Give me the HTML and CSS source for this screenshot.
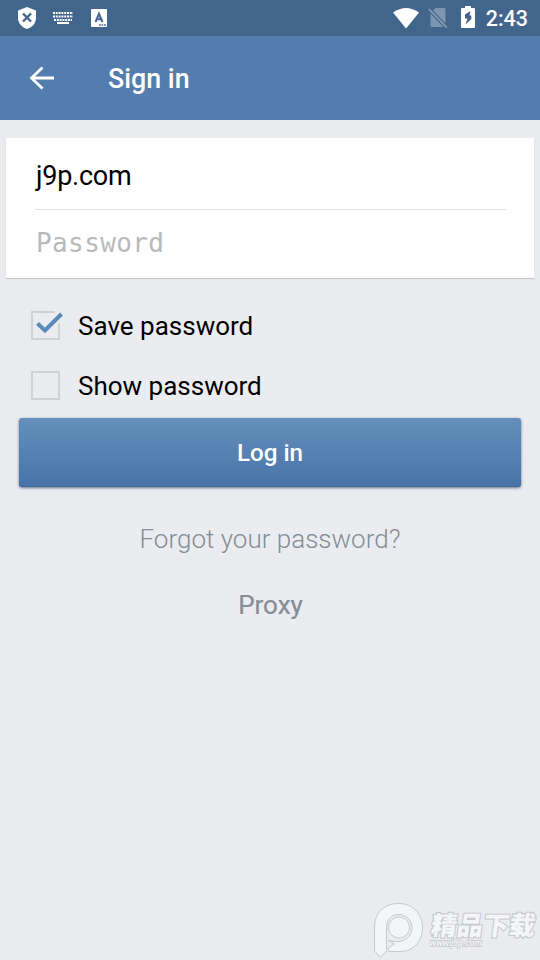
FILE: index.html
```
<!DOCTYPE html>
<html lang="en">
<head>
<meta charset="utf-8">
<title>Sign in</title>
<link rel="stylesheet" href="styles.css">
</head>
<body>
<header class="status">
  <div class="status-left">
    <svg width="20" height="22" viewBox="0 0 20 22"><path d="M10 0L19 3.500V11C19 16 15.500 20 10 22C4.500 20 1 16 1 11V3.500Z" fill="#fff"/><path d="M6 6.500L14 14.500M14 6.500L6 14.500" stroke="#42658c" stroke-width="2.400"/></svg>
    <svg width="22" height="14" viewBox="0 0 22 14"><path d="M1 2H21M1 5.500H21M2 9H20" stroke="#fff" stroke-width="2" stroke-dasharray="2 .8"/><path d="M5 12H17" stroke="#fff" stroke-width="2"/></svg>
    <svg class="letter" width="16" height="18" viewBox="0 0 16 18"><rect width="16" height="18" rx="1" fill="#fff"/><path d="M4.500 13L8 4.800L11.500 13M5.800 10.300H10.200" fill="none" stroke="#42658c" stroke-width="2"/><path d="M8 16H15" stroke="#42658c" stroke-width="1.500" stroke-dasharray="1.700 .8"/></svg>
  </div>
  <div class="status-right">
    <svg width="26" height="21" viewBox="0 0 26 21"><path d="M0 4.500Q13 -4.500 26 4.500L13 20.500Z" fill="#fff"/></svg>
    <svg class="sim" width="20" height="22" viewBox="0 0 20 22"><path d="M7.500 1H16Q17.500 1 17.500 2.500V16.500L5 3.500ZM2.500 6.500L15.500 20H4Q2.500 20 2.500 18.500Z" fill="#7c95b1"/><path d="M.8 2L18.800 20.500" stroke="#8ba1ba" stroke-width="1.600"/></svg>
    <svg class="battery" width="14" height="22" viewBox="0 0 14 22"><path d="M4 0H10V2H13Q14 2 14 3V21Q14 22 13 22H1Q0 22 0 21V3Q0 2 1 2H4Z" fill="#fff"/><path d="M9.500 5L4 8.500V12.500H6.500L4.500 18.500L10.300 13V9.500H8.500Z" fill="#42658c"/></svg>
    <span class="clock">2:43</span>
  </div>
</header>
<nav class="bar">
  <svg width="26" height="24" viewBox="0 0 26 24"><path d="M13.500 1.500L2.500 12L13.500 22.500M2.500 12H25" fill="none" stroke="#fff" stroke-width="2.800"/></svg>
  <h1>Sign in</h1>
</nav>
<main>
  <section class="fields">
    <div class="field login">j9p.com</div>
    <div class="field password">Password</div>
  </section>
  <div class="options">
    <div class="option"><svg width="32" height="30" viewBox="0 0 32 30"><path d="M24 2H1V29H28V13" fill="none" stroke="#d1d2d4" stroke-width="2"/><path d="M6.500 13.500L14 20.500L30.500 4" fill="none" stroke="#5b8ab9" stroke-width="4"/></svg><span>Save password</span></div>
    <div class="option"><svg width="32" height="30" viewBox="0 0 32 30"><rect x="1" y="2" width="27" height="27" fill="none" stroke="#d1d2d4" stroke-width="2"/></svg><span>Show password</span></div>
  </div>
  <div class="button">Log in</div>
  <div class="forgot">Forgot your password?</div>
  <div class="proxy">Proxy</div>
</main>
<div class="watermark">
  <svg width="170" height="60" viewBox="0 0 170 60">
    <g fill="#f4f5f8" stroke="#c8c9cc" stroke-width="1">
      <path d="M4.500 27C4.500 12 15 3.500 28.500 3.500C43 3.500 52.500 14 52.500 27.500C52.500 42 43 51.500 30 51.500H18.500V48L24.500 44L18.500 40.500C22 41 26 42 29 41.500C37 40.500 42 35 42 27.500C42 20 36 14.500 28.500 14.500C21 14.500 16.500 20 16.500 27.500V51L10.500 57.500L4.500 51Z"/>
      <circle cx="29" cy="27.500" r="10.500"/>
    </g>
    <g class="mark" transform="skewX(-8)"><text class="cn" x="65" y="35" textLength="104" lengthAdjust="spacingAndGlyphs">精品下载</text><text class="url" x="66" y="46" textLength="52" lengthAdjust="spacingAndGlyphs">www.j9p.com</text></g>
  </svg>
</div>
</body>
</html>
```
FILE: styles.css
```
* { box-sizing: border-box; }
body { margin: 0; height: 960px; display: flex; flex-direction: column; background: #ebecf0; font-family: Roboto, sans-serif; color: #000; overflow: hidden; }
svg { display: block; flex: none; }
.status { height: 36px; background: #42658c; display: flex; justify-content: space-between; align-items: center; padding: 0 12px 0 17px; }
.status-left, .status-right { display: flex; align-items: center; }
.status-left { gap: 15px; }
.letter { margin-left: 2px; }
.sim { margin-left: 9px; }
.battery { margin: -2px 0 0 13px; }
.clock { margin-left: 11px; color: #fff; font-size: 21.5px; font-weight: 500; line-height: 36px; padding-top: 1px; }
.bar { height: 84px; background: #527dae; display: flex; align-items: center; padding-left: 29px; gap: 53px; }
h1 { margin: 2px 0 0; color: #fff; font-size: 26.8px; font-weight: 500; line-height: 36px; }
main { flex: 1; padding-top: 18px; }
.fields { margin: 0 6px; height: 140px; background: #fff; padding: 0 28px 0 29px; box-shadow: 0 1px 1px #c5c6c9; }
.field { font-size: 27px; padding-left: 1px; }
.login { height: 72px; line-height: 76px; border-bottom: 1px solid #e0e1e3; letter-spacing: -.25px; }
.password { font-family: "DejaVu Sans Mono", monospace; font-size: 26px; letter-spacing: .4px; line-height: 67px; color: #b9b9b9; }
.options { padding: 17px 0 0 31px; }
.option { height: 60px; display: flex; align-items: center; gap: 15px; font-size: 26px; }
.option span { padding-top: 2px; }
.button { margin: 3px 19px 0; height: 69px; border-radius: 3px; background: linear-gradient(#638fbb, #4974a8); color: #fff; font-size: 24.2px; font-weight: 500; line-height: 70px; text-align: center; box-shadow: 0 1px 3px #65758b, inset 0 -1px #446996; }
.forgot, .proxy { text-align: center; color: #858d96; font-size: 26px; line-height: 36px; }
.forgot { margin-top: 34px; font-weight: 300; }
.proxy { margin-top: 30px; font-weight: 400; padding-left: 1px; -webkit-text-stroke: .2px #858d96; }
.watermark { position: absolute; right: 0; bottom: 0; }
.mark { fill: #f4f5f8; stroke: #c5c6c9; stroke-width: 2px; paint-order: stroke; }
.cn { font: 900 26px "Noto Sans CJK SC", sans-serif; }
.url { font: bold 10px "Liberation Sans", sans-serif; stroke-width: 1.5px; }
```
